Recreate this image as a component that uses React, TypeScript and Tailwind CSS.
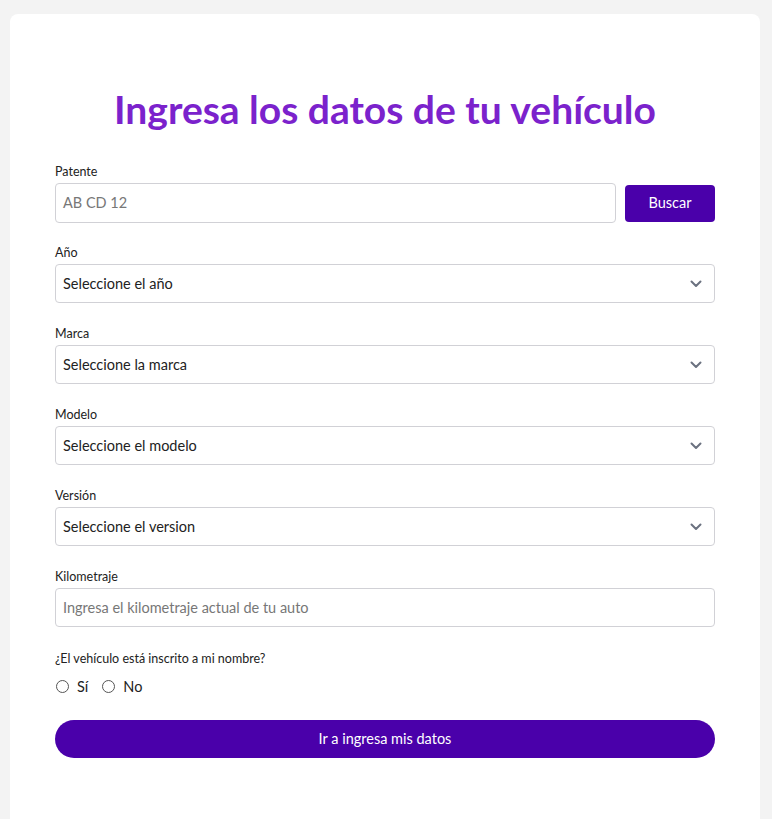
import React from "react";

function Chevron() {
  return (
    <svg width="12" height="8" viewBox="0 0 12 8" className="absolute right-[12px] top-1/2 -translate-y-1/2" fill="none">
      <path d="M1.5 1.5 L6 6 L10.5 1.5" stroke="#6b7280" strokeWidth="2" strokeLinecap="round" strokeLinejoin="round" />
    </svg>
  );
}

function SelectField({ label, text }: { label: string; text: string }) {
  return (
    <div className="mb-[23px]">
      <div className="text-[12.5px] leading-[16px] text-[#222] mb-[3px]">{label}</div>
      <div className="relative h-[39px] border border-[#d1d1d6] rounded-[4px] flex items-center pl-[7px] text-[14.5px] text-[#222]">
        {text}
        <Chevron />
      </div>
    </div>
  );
}

export default function App() {
  return (
    <div className="min-h-[819px] bg-[#f3f3f3] pt-[14px] pl-[10px] pr-[12px]" style={{ fontFamily: "Lato, 'Open Sans', sans-serif" }}>
      <div className="bg-white rounded-t-[8px] min-h-[805px] px-[45px] pt-[69px]">
        <h1 className="text-center text-[39px] leading-[52px] font-bold text-[#7b22cc] mb-[29px]">
          Ingresa los datos de tu vehículo
        </h1>
        <div className="mb-[22px]">
          <div className="text-[12.5px] leading-[16px] text-[#222] mb-[3px]">Patente</div>
          <div className="flex items-center gap-[9px]">
            <div className="flex-1 h-[40px] border border-[#d1d1d6] rounded-[4px] flex items-center pl-[7px] text-[14.5px] text-[#777]">
              AB CD 12
            </div>
            <button className="w-[90px] h-[37px] bg-[#4a00aa] rounded-[4px] text-white text-[14.5px]">Buscar</button>
          </div>
        </div>
        <SelectField label="Año" text="Seleccione el año" />
        <SelectField label="Marca" text="Seleccione la marca" />
        <SelectField label="Modelo" text="Seleccione el modelo" />
        <SelectField label="Versión" text="Seleccione el version" />
        <div className="mb-[24px]">
          <div className="text-[12.5px] leading-[16px] text-[#222] mb-[3px]">Kilometraje</div>
          <div className="h-[39px] border border-[#d1d1d6] rounded-[4px] flex items-center pl-[7px] text-[14.5px] text-[#777]">
            Ingresa el kilometraje actual de tu auto
          </div>
        </div>
        <div className="text-[12.5px] leading-[16px] text-[#222] mb-[9px]">¿El vehículo está inscrito a mi nombre?</div>
        <div className="flex items-center text-[14.5px] text-[#222] mb-[22px] pl-[1px]">
          <span className="w-[13px] h-[13px] rounded-full border border-[#555] mr-[8px]" />
          <span className="mr-[14px]">Sí</span>
          <span className="w-[13px] h-[13px] rounded-full border border-[#555] mr-[8px]" />
          <span>No</span>
        </div>
        <button className="w-full h-[38px] rounded-full bg-[#4a00aa] text-white text-[14.5px]">Ir a ingresa mis datos</button>
      </div>
    </div>
  );
}
